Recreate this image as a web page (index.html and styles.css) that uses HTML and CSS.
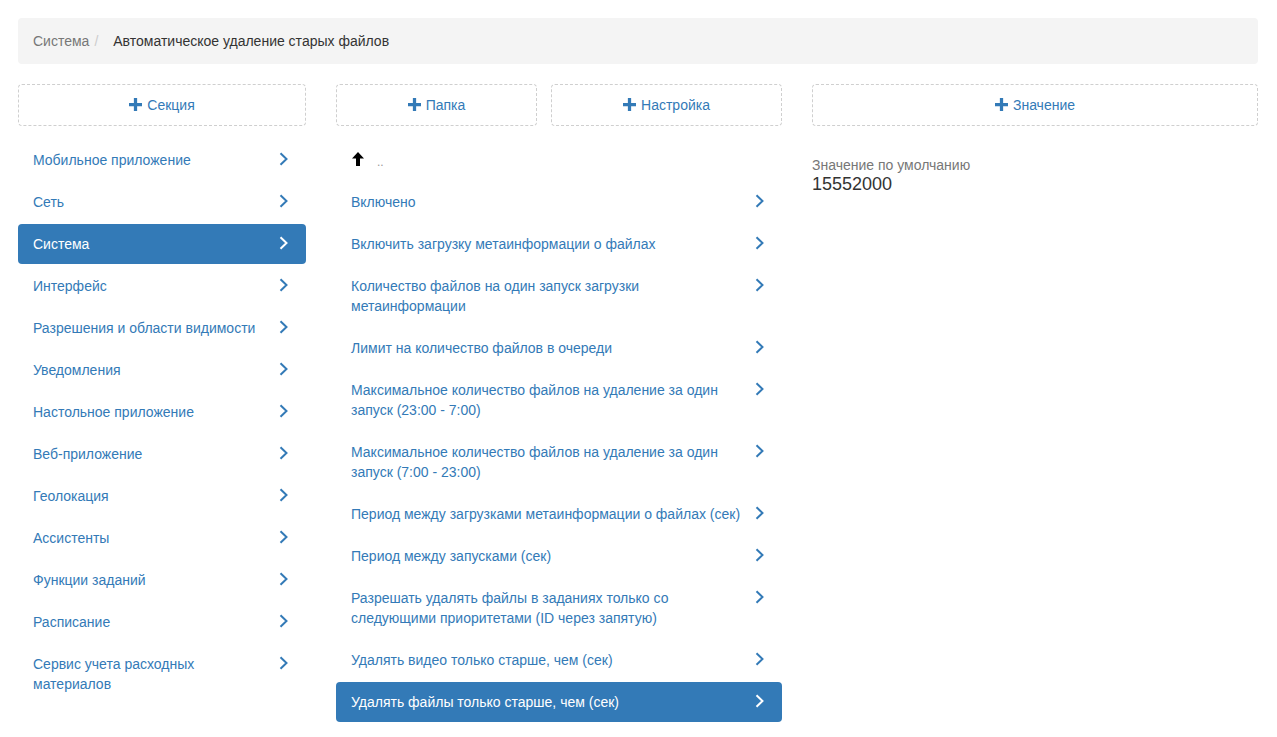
FILE: index.html
```html
<!DOCTYPE html>
<html lang="ru">
<head>
<meta charset="utf-8">
<title>Автоматическое удаление старых файлов</title>
<link rel="stylesheet" href="styles.css">
</head>
<body>
<div class="page">
  <div class="breadcrumb">
    <span class="crumb">Система</span><span class="sep">/</span><span class="crumb-active">Автоматическое удаление старых файлов</span>
  </div>
  <div class="columns">
    <div class="col col-left">
      <div class="add-row">
        <button class="add-btn"><svg class="plus" viewBox="0 0 12 12"><path d="M4.5 0h3v4.5H12v3H7.5V12h-3V7.5H0v-3h4.5z"/></svg>Секция</button>
      </div>
      <ul class="list">
        <li class="item"><span class="label">Мобильное приложение</span><svg class="chev" viewBox="0 0 14 14"><path d="M3.5 1.2l6 5.8-6 5.8"/></svg></li>
        <li class="item"><span class="label">Сеть</span><svg class="chev" viewBox="0 0 14 14"><path d="M3.5 1.2l6 5.8-6 5.8"/></svg></li>
        <li class="item active"><span class="label">Система</span><svg class="chev" viewBox="0 0 14 14"><path d="M3.5 1.2l6 5.8-6 5.8"/></svg></li>
        <li class="item"><span class="label">Интерфейс</span><svg class="chev" viewBox="0 0 14 14"><path d="M3.5 1.2l6 5.8-6 5.8"/></svg></li>
        <li class="item"><span class="label">Разрешения и области видимости</span><svg class="chev" viewBox="0 0 14 14"><path d="M3.5 1.2l6 5.8-6 5.8"/></svg></li>
        <li class="item"><span class="label">Уведомления</span><svg class="chev" viewBox="0 0 14 14"><path d="M3.5 1.2l6 5.8-6 5.8"/></svg></li>
        <li class="item"><span class="label">Настольное приложение</span><svg class="chev" viewBox="0 0 14 14"><path d="M3.5 1.2l6 5.8-6 5.8"/></svg></li>
        <li class="item"><span class="label">Веб-приложение</span><svg class="chev" viewBox="0 0 14 14"><path d="M3.5 1.2l6 5.8-6 5.8"/></svg></li>
        <li class="item"><span class="label">Геолокация</span><svg class="chev" viewBox="0 0 14 14"><path d="M3.5 1.2l6 5.8-6 5.8"/></svg></li>
        <li class="item"><span class="label">Ассистенты</span><svg class="chev" viewBox="0 0 14 14"><path d="M3.5 1.2l6 5.8-6 5.8"/></svg></li>
        <li class="item"><span class="label">Функции заданий</span><svg class="chev" viewBox="0 0 14 14"><path d="M3.5 1.2l6 5.8-6 5.8"/></svg></li>
        <li class="item"><span class="label">Расписание</span><svg class="chev" viewBox="0 0 14 14"><path d="M3.5 1.2l6 5.8-6 5.8"/></svg></li>
        <li class="item"><span class="label">Сервис учета расходных материалов</span><svg class="chev" viewBox="0 0 14 14"><path d="M3.5 1.2l6 5.8-6 5.8"/></svg></li>
      </ul>
    </div>
    <div class="col col-mid">
      <div class="add-row add-row-two">
        <button class="add-btn"><svg class="plus" viewBox="0 0 12 12"><path d="M4.5 0h3v4.5H12v3H7.5V12h-3V7.5H0v-3h4.5z"/></svg>Папка</button>
        <button class="add-btn"><svg class="plus" viewBox="0 0 12 12"><path d="M4.5 0h3v4.5H12v3H7.5V12h-3V7.5H0v-3h4.5z"/></svg>Настройка</button>
      </div>
      <ul class="list">
        <li class="item up"><svg class="arrow-up" viewBox="0 0 12 14"><path d="M6 0L12 6.5H8V14H4V6.5H0z"/></svg><span class="dots">..</span></li>
        <li class="item"><span class="label">Включено</span><svg class="chev" viewBox="0 0 14 14"><path d="M3.5 1.2l6 5.8-6 5.8"/></svg></li>
        <li class="item"><span class="label">Включить загрузку метаинформации о файлах</span><svg class="chev" viewBox="0 0 14 14"><path d="M3.5 1.2l6 5.8-6 5.8"/></svg></li>
        <li class="item"><span class="label">Количество файлов на один запуск загрузки метаинформации</span><svg class="chev" viewBox="0 0 14 14"><path d="M3.5 1.2l6 5.8-6 5.8"/></svg></li>
        <li class="item"><span class="label">Лимит на количество файлов в очереди</span><svg class="chev" viewBox="0 0 14 14"><path d="M3.5 1.2l6 5.8-6 5.8"/></svg></li>
        <li class="item"><span class="label">Максимальное количество файлов на удаление за один запуск (23:00 - 7:00)</span><svg class="chev" viewBox="0 0 14 14"><path d="M3.5 1.2l6 5.8-6 5.8"/></svg></li>
        <li class="item"><span class="label">Максимальное количество файлов на удаление за один запуск (7:00 - 23:00)</span><svg class="chev" viewBox="0 0 14 14"><path d="M3.5 1.2l6 5.8-6 5.8"/></svg></li>
        <li class="item"><span class="label">Период между загрузками метаинформации о файлах (сек)</span><svg class="chev" viewBox="0 0 14 14"><path d="M3.5 1.2l6 5.8-6 5.8"/></svg></li>
        <li class="item"><span class="label">Период между запусками (сек)</span><svg class="chev" viewBox="0 0 14 14"><path d="M3.5 1.2l6 5.8-6 5.8"/></svg></li>
        <li class="item"><span class="label">Разрешать удалять файлы в заданиях только со следующими приоритетами (ID через запятую)</span><svg class="chev" viewBox="0 0 14 14"><path d="M3.5 1.2l6 5.8-6 5.8"/></svg></li>
        <li class="item"><span class="label">Удалять видео только старше, чем (сек)</span><svg class="chev" viewBox="0 0 14 14"><path d="M3.5 1.2l6 5.8-6 5.8"/></svg></li>
        <li class="item active"><span class="label">Удалять файлы только старше, чем (сек)</span><svg class="chev" viewBox="0 0 14 14"><path d="M3.5 1.2l6 5.8-6 5.8"/></svg></li>
      </ul>
    </div>
    <div class="col col-right">
      <div class="add-row">
        <button class="add-btn"><svg class="plus" viewBox="0 0 12 12"><path d="M4.5 0h3v4.5H12v3H7.5V12h-3V7.5H0v-3h4.5z"/></svg>Значение</button>
      </div>
      <div class="value-block">
        <div class="value-label">Значение по умолчанию</div>
        <div class="value">15552000</div>
      </div>
    </div>
  </div>
</div>
</body>
</html>
```

FILE: styles.css
```css
* { box-sizing: border-box; }
html, body { margin: 0; padding: 0; background: #fff; }
body {
  font-family: "Liberation Sans", Arial, Helvetica, sans-serif;
  font-size: 14px;
  line-height: 20px;
  color: #333;
}
.page { padding: 18px 19px 0 18px; }

.breadcrumb {
  background: #f4f4f4;
  border-radius: 4px;
  padding: 13px 15px 12px;
  height: 46px;
}
.crumb { color: #777; }
.sep { color: #ccc; padding: 0 5px 0 5px; margin-right: 10px; }
.crumb-active { color: #333; }

.columns {
  display: grid;
  grid-template-columns: 288px 446px 446px;
  column-gap: 30px;
  margin-top: 20px;
}

.add-row { display: flex; margin-bottom: 14px; }
.add-row-two { display: grid; grid-template-columns: 201px 1fr; column-gap: 14px; }

.add-btn {
  flex: 1;
  height: 42px;
  border: 1px dashed #cfcfcf;
  border-radius: 4px;
  background: #fff;
  color: #337ab7;
  font-family: inherit;
  font-size: 14px;
  line-height: 20px;
  display: flex;
  align-items: center;
  justify-content: center;
  padding: 0;
  cursor: pointer;
}
.plus { width: 13px; height: 13px; fill: #337ab7; margin-right: 5px; margin-top: -1px; }

.list { list-style: none; margin: 0; padding: 0; }
.item {
  display: flex;
  align-items: flex-start;
  padding: 10px 15px;
  margin-bottom: 2px;
  border-radius: 4px;
  color: #337ab7;
}
.item .label { flex: 1; padding-right: 6px; }
.chev {
  width: 14px;
  height: 14px;
  flex: none;
  margin-top: 2px;
  fill: none;
  stroke: #337ab7;
  stroke-width: 2;
}
.item.active { background: #337ab7; color: #fff; }
.item.active .chev { stroke: #fff; }

.item.up { align-items: center; height: 40px; }
.arrow-up { width: 12px; height: 14px; fill: #000; margin-left: 1px; margin-top: -2px; }
.dots { color: #999; margin-left: 13px; font-size: 12px; line-height: 14px; margin-top: 4px; }

.value-block { padding-top: 17px; }
.value-label { color: #777; line-height: 16px; }
.value { font-size: 18px; line-height: 22px; color: #333; }
```
